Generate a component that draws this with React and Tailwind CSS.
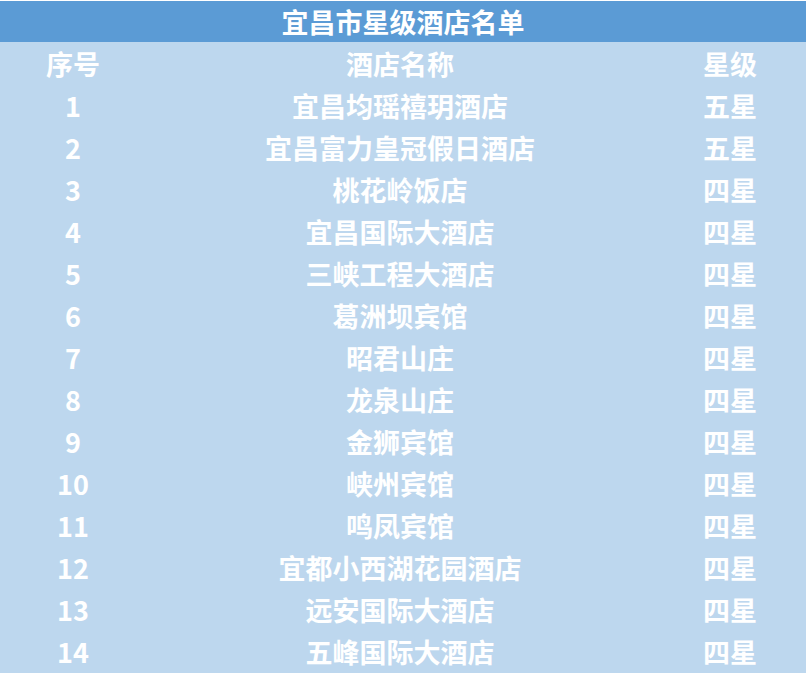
import React from 'react';

const hotels = [
  ['1', '宜昌均瑶禧玥酒店', '五星'],
  ['2', '宜昌富力皇冠假日酒店', '五星'],
  ['3', '桃花岭饭店', '四星'],
  ['4', '宜昌国际大酒店', '四星'],
  ['5', '三峡工程大酒店', '四星'],
  ['6', '葛洲坝宾馆', '四星'],
  ['7', '昭君山庄', '四星'],
  ['8', '龙泉山庄', '四星'],
  ['9', '金狮宾馆', '四星'],
  ['10', '峡州宾馆', '四星'],
  ['11', '鸣凤宾馆', '四星'],
  ['12', '宜都小西湖花园酒店', '四星'],
  ['13', '远安国际大酒店', '四星'],
  ['14', '五峰国际大酒店', '四星'],
];

const Row = ({ cells }) => (
  <div className="grid grid-cols-[146px_508px_152px] h-[42px]">
    {cells.map((c, i) => (
      <div key={i} className="flex items-center justify-center leading-none pb-[2px]">
        {c}
      </div>
    ))}
  </div>
);

export default function App() {
  return (
    <div className="w-[809px] h-[675px] bg-white pt-[1px]">
      <div
        className="w-[806px] bg-[#bdd7ee] text-white font-bold text-[27px]"
        style={{ fontFamily: '"Noto Sans CJK SC", "Microsoft YaHei", sans-serif' }}
      >
        <div className="h-[41px] bg-[#5b9bd5] flex items-center justify-center leading-none">
          宜昌市星级酒店名单
        </div>
        <div className="pt-[1px]">
          <Row cells={['序号', '酒店名称', '星级']} />
          {hotels.map((h) => (
            <Row key={h[0]} cells={h} />
          ))}
        </div>
      </div>
    </div>
  );
}
